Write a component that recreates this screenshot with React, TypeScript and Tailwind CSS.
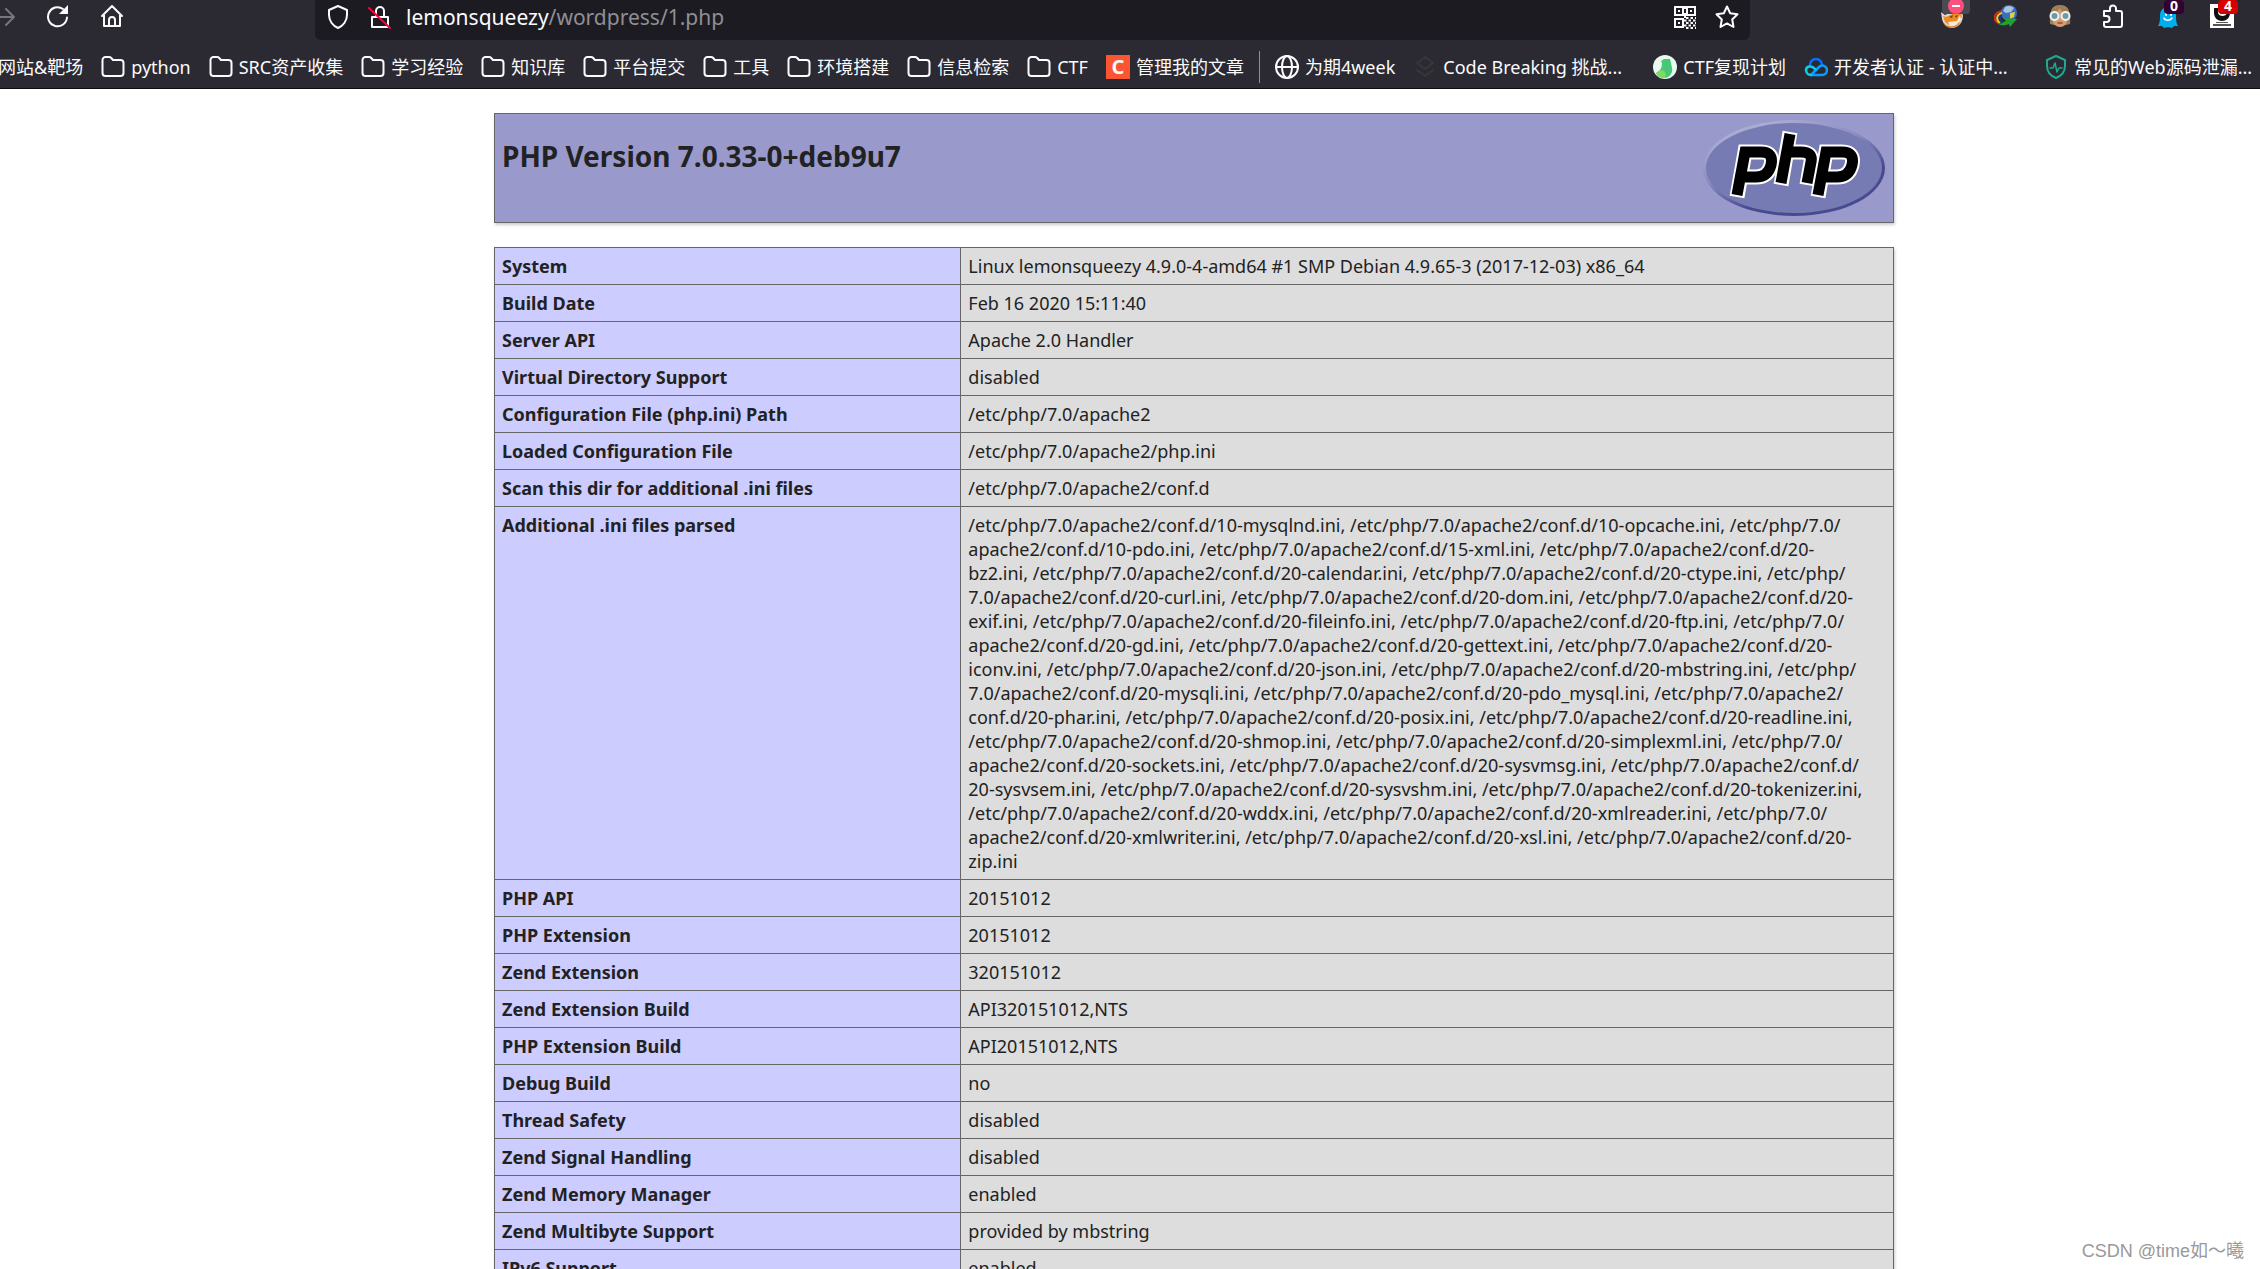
import type { ReactNode } from "react";

const folders = [
  "python",
  "SRC资产收集",
  "学习经验",
  "知识库",
  "平台提交",
  "工具",
  "环境搭建",
  "信息检索",
  "CTF",
];

const iniLines = [
  "/etc/php/7.0/apache2/conf.d/10-mysqlnd.ini, /etc/php/7.0/apache2/conf.d/10-opcache.ini, /etc/php/7.0/",
  "apache2/conf.d/10-pdo.ini, /etc/php/7.0/apache2/conf.d/15-xml.ini, /etc/php/7.0/apache2/conf.d/20-",
  "bz2.ini, /etc/php/7.0/apache2/conf.d/20-calendar.ini, /etc/php/7.0/apache2/conf.d/20-ctype.ini, /etc/php/",
  "7.0/apache2/conf.d/20-curl.ini, /etc/php/7.0/apache2/conf.d/20-dom.ini, /etc/php/7.0/apache2/conf.d/20-",
  "exif.ini, /etc/php/7.0/apache2/conf.d/20-fileinfo.ini, /etc/php/7.0/apache2/conf.d/20-ftp.ini, /etc/php/7.0/",
  "apache2/conf.d/20-gd.ini, /etc/php/7.0/apache2/conf.d/20-gettext.ini, /etc/php/7.0/apache2/conf.d/20-",
  "iconv.ini, /etc/php/7.0/apache2/conf.d/20-json.ini, /etc/php/7.0/apache2/conf.d/20-mbstring.ini, /etc/php/",
  "7.0/apache2/conf.d/20-mysqli.ini, /etc/php/7.0/apache2/conf.d/20-pdo_mysql.ini, /etc/php/7.0/apache2/",
  "conf.d/20-phar.ini, /etc/php/7.0/apache2/conf.d/20-posix.ini, /etc/php/7.0/apache2/conf.d/20-readline.ini,",
  "/etc/php/7.0/apache2/conf.d/20-shmop.ini, /etc/php/7.0/apache2/conf.d/20-simplexml.ini, /etc/php/7.0/",
  "apache2/conf.d/20-sockets.ini, /etc/php/7.0/apache2/conf.d/20-sysvmsg.ini, /etc/php/7.0/apache2/conf.d/",
  "20-sysvsem.ini, /etc/php/7.0/apache2/conf.d/20-sysvshm.ini, /etc/php/7.0/apache2/conf.d/20-tokenizer.ini,",
  "/etc/php/7.0/apache2/conf.d/20-wddx.ini, /etc/php/7.0/apache2/conf.d/20-xmlreader.ini, /etc/php/7.0/",
  "apache2/conf.d/20-xmlwriter.ini, /etc/php/7.0/apache2/conf.d/20-xsl.ini, /etc/php/7.0/apache2/conf.d/20-",
  "zip.ini",
];

const rows = [
  { name: "System", value: "Linux lemonsqueezy 4.9.0-4-amd64 #1 SMP Debian 4.9.65-3 (2017-12-03) x86_64" },
  { name: "Build Date", value: "Feb 16 2020 15:11:40" },
  { name: "Server API", value: "Apache 2.0 Handler" },
  { name: "Virtual Directory Support", value: "disabled" },
  { name: "Configuration File (php.ini) Path", value: "/etc/php/7.0/apache2" },
  { name: "Loaded Configuration File", value: "/etc/php/7.0/apache2/php.ini" },
  { name: "Scan this dir for additional .ini files", value: "/etc/php/7.0/apache2/conf.d" },
  { name: "Additional .ini files parsed", value: iniLines.join("\n") },
  { name: "PHP API", value: "20151012" },
  { name: "PHP Extension", value: "20151012" },
  { name: "Zend Extension", value: "320151012" },
  { name: "Zend Extension Build", value: "API320151012,NTS" },
  { name: "PHP Extension Build", value: "API20151012,NTS" },
  { name: "Debug Build", value: "no" },
  { name: "Thread Safety", value: "disabled" },
  { name: "Zend Signal Handling", value: "disabled" },
  { name: "Zend Memory Manager", value: "enabled" },
  { name: "Zend Multibyte Support", value: "provided by mbstring" },
  { name: "IPv6 Support", value: "enabled" },
];

const Icon = ({ children }: { children: ReactNode }) => (
  <svg
    viewBox="0 0 24 24"
    fill="none"
    stroke="#fbfbfe"
    strokeWidth="2"
    strokeLinecap="round"
    strokeLinejoin="round"
    className="size-6 shrink-0"
    aria-hidden="true"
  >
    {children}
  </svg>
);

const FolderIcon = () => (
  <Icon>
    <path d="M1.500 18V5a3 3 0 0 1 3-3h3.500a3 3 0 0 1 2.200 1l1.800 2h7.500a3 3 0 0 1 3 3V18a3 3 0 0 1-3 3h-15a3 3 0 0 1-3-3Z" />
  </Icon>
);

const QrIcon = () => (
  <Icon>
    <g strokeLinejoin="miter" strokeLinecap="butt">
      <path d="M2 2h8v8H2zM14 2h8v8h-8zM2 14h8v8H2z" />
      <path d="M5 6h2M17 6h2M5 18h2M12 1v3M12 8v5" />
      <path d="M13 13h10M11 15.500h12M13 18h10M11 20.500h12M13 23h10" strokeDasharray="2.500 2" />
    </g>
  </Icon>
);

const Foxy = () => (
  <Icon>
    <g stroke="none">
      <path d="M1 8l4 3 13-6 5 6c0 8-5 13-11 13C7 24 3 20 2 15z" fill="#dcd8cf" />
      <path d="M3 12l3 1 13-6 3 5-4 8-9 1-4-3z" fill="#ee8a22" />
      <path d="M8 18l9-1 3-6 1 5-5 5-6 1z" fill="#f7ecdb" />
      <path d="M9 13l4-2-1 3zM15 12l3-1-2 3z" fill="#7a3f10" />
      <path d="M3 18c4 6 14 6 18-2-2 9-14 11-18 2z" fill="#e5822a" />
    </g>
  </Icon>
);

const Idm = () => (
  <Icon>
    <circle cx="15" cy="9" r="8" fill="#3b6fbe" stroke="none" />
    <path d="M11 3c3-2 7-1 9 1l-3 4-5 1-3-2z" fill="#a9c3e0" stroke="none" />
    <path d="M16 9l5-1-1 5-4 2z" fill="#d8cf4a" stroke="none" />
    <g strokeLinecap="butt">
      <path d="M8 7C-1 9-1 16 4 19" stroke="#d3301f" />
      <path d="M8 9C2 11 2 16 6 19" stroke="#f5cf22" />
      <path d="M8 11c-4 2-3 7 2 8" stroke="#173f8c" />
    </g>
    <path d="M3 19c4 1 7 0 9-3l-2-2 13 1-7 8-1-3c-4 2-9 2-12-1z" fill="#1fa32d" stroke="none" />
  </Icon>
);

const Face = () => (
  <Icon>
    <g stroke="none">
      <path d="M2 20C1 8 3 1 12 1s11 7 10 19l-4 1H6z" fill="#9c8055" />
      <path d="M4 12c2-2 5-3 8-8 1 4 5 6 8 8 0 7-3 11-8 11s-8-4-8-11z" fill="#d59a74" />
    </g>
    <path d="M10 19h4" stroke="#8d4a3c" strokeWidth="1.500" />
    <circle cx="6.500" cy="12" r="4" fill="#6f9aa5" stroke="#eef4f5" />
    <circle cx="17.500" cy="12" r="4" fill="#6f9aa5" stroke="#eef4f5" />
  </Icon>
);

const Ghost = () => (
  <Icon>
    <path d="M2 22c2-3 2-6 2-11a8 8 0 0 1 16 0c0 5 0 8 2 11l-4 0-2 2-4-1-4 1-2-2z" fill="#00aef0" stroke="none" />
    <path d="M8 14c1 3 6 3 8 0" strokeWidth="1.500" />
    <path d="M10 9v2M15 9v2" />
  </Icon>
);

const Panda = () => (
  <Icon>
    <g stroke="none">
      <path d="M0 0h24v24H0z" fill="#fff" />
      <path d="M4 4h4v5c1 4 8 4 9 0h3c0 5-4 8-8 8s-8-3-8-8z" fill="#111" />
      <circle cx="11" cy="9" r="1" fill="#111" />
      <path d="M6 18h12v1H6zM3 20h18v2H3z" fill="#555" />
    </g>
  </Icon>
);

const PhpLogo = () => (
  <svg viewBox="0 0 182 96" className="h-24 w-[182px] shrink-0" role="img" aria-label="PHP logo">
    <defs>
      <linearGradient id="rim" x1="0.200" y1="0" x2="0.800" y2="1">
        <stop offset="0" stopColor="#b4b5dc" />
        <stop offset="0.400" stopColor="#8a8cc0" />
        <stop offset="0.700" stopColor="#484a90" />
        <stop offset="1" stopColor="#484a90" />
      </linearGradient>
    </defs>
    <ellipse cx="91" cy="48" rx="91" ry="48" fill="url(#rim)" />
    <ellipse cx="91" cy="48" rx="88" ry="45" fill="#777bb3" />
    <g fill="none" strokeLinejoin="miter">
      <g stroke="#fff" strokeWidth="15">
        <path d="M34 77L42 32H58Q71 32 68 45Q65 57 53 57H38" />
        <path d="M87 12L78 65M84 32H98Q110 32 108 42L104 65" />
        <path d="M115 77L123 32H139Q152 32 149 45Q146 57 134 57H119" />
      </g>
      <g stroke="#000" strokeWidth="11">
        <path d="M34 75L42 32H58Q71 32 68 45Q65 57 53 57H38" />
        <path d="M87 14L78 63M84 32H98Q110 32 108 42L104 63" />
        <path d="M115 75L123 32H139Q152 32 149 45Q146 57 134 57H119" />
      </g>
    </g>
  </svg>
);

const Bookmark = ({ icon, label, wide }: { icon?: ReactNode; label: string; wide?: boolean }) => (
  <a href="#" className={wide ? "flex w-[222px] shrink-0 items-center gap-1.5" : "flex shrink-0 items-center gap-1.5"}>
    {icon}
    <span>{label}</span>
  </a>
);

const Toolbar = () => (
  <div className="flex h-10 items-start pr-[26px]">
    <div className="flex w-[315px] shrink-0 items-center gap-[30px] pt-1">
      <button aria-label="Forward" className="-ml-2">
        <Icon><path d="M1 13h21M14 5l8 8-8 8" stroke="#77767e" /></Icon>
      </button>
      <button aria-label="Reload">
        <Icon><path d="M21 13.500a9.500 9.500 0 1 1-4-8.500" /><path d="M22 1v9h-9z" fill="#fbfbfe" stroke="none" /></Icon>
      </button>
      <button aria-label="Home">
        <Icon><path d="M2 12L12 2l10 10M4 11v11h16V11M9 22v-6a3 3 0 0 1 6 0v6" /></Icon>
      </button>
    </div>
    <div className="flex h-10 w-[1435px] shrink-0 items-center gap-[18px] rounded-b-md bg-[#1c1b22] px-[11px] pb-1.5">
      <Icon><path d="M12 1l9 4v5c0 6-4 11-9 13C7 21 3 16 3 10V5z" /></Icon>
      <Icon><path d="M4 12h16v10H4zM8 12V6a4 4 0 0 1 8 0v6" /><path d="M1 3l21 20" stroke="#ff0039" /></Icon>
      <div className="-ml-1 flex-1 text-[21px] leading-8 text-[#8f8f94]">
        <span className="text-[#fbfbfe]">lemonsqueezy</span>/wordpress/1.php
      </div>
      <button aria-label="QR code"><QrIcon /></button>
      <button aria-label="Bookmark this page">
        <Icon><path d="M12 1.500l3.200 6.800 7.300 1-5.300 5.200 1.300 7.500-6.500-3.600-6.500 3.600 1.300-7.500-5.300-5.200 7.300-1z" /></Icon>
      </button>
    </div>
    <div className="ml-auto flex items-center gap-[30px] pt-1">
      <button aria-label="Proxy" className="relative">
        <Foxy />
        <span className="absolute -top-1.5 left-0.5 flex h-4 w-7 items-center justify-center rounded-sm bg-[#4a4a52]">
          <span className="flex size-4 items-center justify-center rounded-full bg-[#ff4f7b]">
            <span className="h-0.5 w-2 bg-white" />
          </span>
        </span>
      </button>
      <button aria-label="Download manager"><Idm /></button>
      <button aria-label="User agent"><Face /></button>
      <button aria-label="Extensions">
        <Icon><path d="M2 7h6V4.500a3 3 0 0 1 6 0V7h4a2 2 0 0 1 2 2v12a2 2 0 0 1-2 2H4a2 2 0 0 1-2-2v-3h2.500a3 3 0 0 0 0-6H2z" /></Icon>
      </button>
      <button aria-label="Ghostery" className="relative">
        <Ghost />
        <span className="absolute -top-1 left-2 h-3.5 w-5 rounded-sm bg-[#330033] text-sm leading-3 font-bold text-white">0</span>
      </button>
      <button aria-label="Panda" className="relative">
        <Panda />
        <span className="absolute -top-1 left-2 h-3.5 w-5 rounded-sm bg-[#d90000] text-sm leading-3 font-bold text-white">4</span>
      </button>
    </div>
  </div>
);

const Bookmarks = () => (
  <nav className="-ml-0.5 flex h-12 items-center gap-[18px] overflow-hidden pt-1.5 text-lg whitespace-nowrap text-[#fbfbfe]">
    <Bookmark label="网站&靶场" />
    {folders.map((label) => (
      <Bookmark key={label} icon={<FolderIcon />} label={label} />
    ))}
    <Bookmark
      icon={
        <span className="flex size-6 items-center justify-center bg-[#fc5531] text-xl leading-6 font-bold">C</span>
      }
      label="管理我的文章"
    />
    <span className="-mx-[3px] h-8 w-px shrink-0 bg-[#8f8f94]" />
    <Bookmark
      icon={<Icon><circle cx="12" cy="12" r="11" /><ellipse cx="12" cy="12" rx="5" ry="11" /><path d="M1 12h22" /></Icon>}
      label="为期4week"
    />
    <Bookmark
      wide
      icon={<Icon><path d="M12 2l8 6-8 6-8-6zM4 15l8 6 8-6" stroke="#37373a" /></Icon>}
      label="Code Breaking 挑战..."
    />
    <Bookmark
      icon={
        <Icon>
          <circle cx="12" cy="12" r="12" fill="#e9f9ef" stroke="none" />
          <path d="M8 6l3-2h6l1 4 1 5c1 5-2 9-7 10-5 0-8-2-9-5 4-2 6-5 6-10z" fill="#46c878" stroke="none" />
          <path d="M3 18c3-3 7-4 9-1 1 2 1 4 0 6-5 0-8-2-9-5z" fill="#7ddb5e" stroke="none" />
        </Icon>
      }
      label="CTF复现计划"
    />
    <Bookmark
      wide
      icon={
        <Icon>
          <path d="M6 10a6 6 0 0 1 12 0" stroke="#0a6cff" strokeWidth="2.500" />
          <path d="M7 20l8-8c3-3 8-1 8 3a5 5 0 0 1-5 5z" stroke="#0a9cff" strokeWidth="2.500" />
          <path d="M11 14c-3-4-9-3-9 1a5 5 0 0 0 5 5" stroke="#00d5e6" strokeWidth="2.500" />
        </Icon>
      }
      label="开发者认证 - 认证中..."
    />
    <Bookmark
      icon={<Icon><path d="M12 1l9 4v6c0 6-4 10-9 12-5-2-9-6-9-12V5z" stroke="#20a890" /><path d="M6 13h3l2-5 2 9 2-4h3" stroke="#20a890" strokeWidth="1.500" /></Icon>}
      label="常见的Web源码泄漏..."
    />
  </nav>
);

const App = () => {
  return (
    <div className="relative h-screen overflow-hidden bg-white font-['Noto_Sans','Noto_Sans_CJK_SC',sans-serif] text-[#222222]">
      <header className="border-b border-[#0c0c0d] bg-[#2b2a33]">
        <Toolbar />
        <Bookmarks />
      </header>
      <div className="pt-6 pl-32">
        <main className="mx-auto max-w-[1400px]">
          <div className="flex items-start justify-between border border-[#666666] bg-[#9999cc] py-1.5 pr-2 pl-[7px] shadow-[1px_2px_3px_#cccccc]">
            <h1 className="pt-[18px] text-[28px] leading-9 font-bold">PHP Version 7.0.33-0+deb9u7</h1>
            <PhpLogo />
          </div>
          <table className="mt-6 w-full border-collapse text-[18px] leading-6 shadow-[1px_2px_3px_#cccccc]">
            <tbody>
              {rows.map((row) => (
                <tr key={row.name}>
                  <th scope="row" className="w-1/3 border border-[#666666] bg-[#ccccff] px-[7px] py-1.5 text-left align-top font-bold">
                    {row.name}
                  </th>
                  <td className="border border-[#666666] bg-[#dddddd] px-[7px] py-1.5 align-top whitespace-pre-line">
                    {row.value}
                  </td>
                </tr>
              ))}
            </tbody>
          </table>
        </main>
      </div>
      <p className="absolute right-4 bottom-1 font-['Liberation_Sans','Noto_Sans_CJK_SC',sans-serif] text-lg text-[#999999]">
        CSDN @time如～曦
      </p>
    </div>
  );
};

export default App;
